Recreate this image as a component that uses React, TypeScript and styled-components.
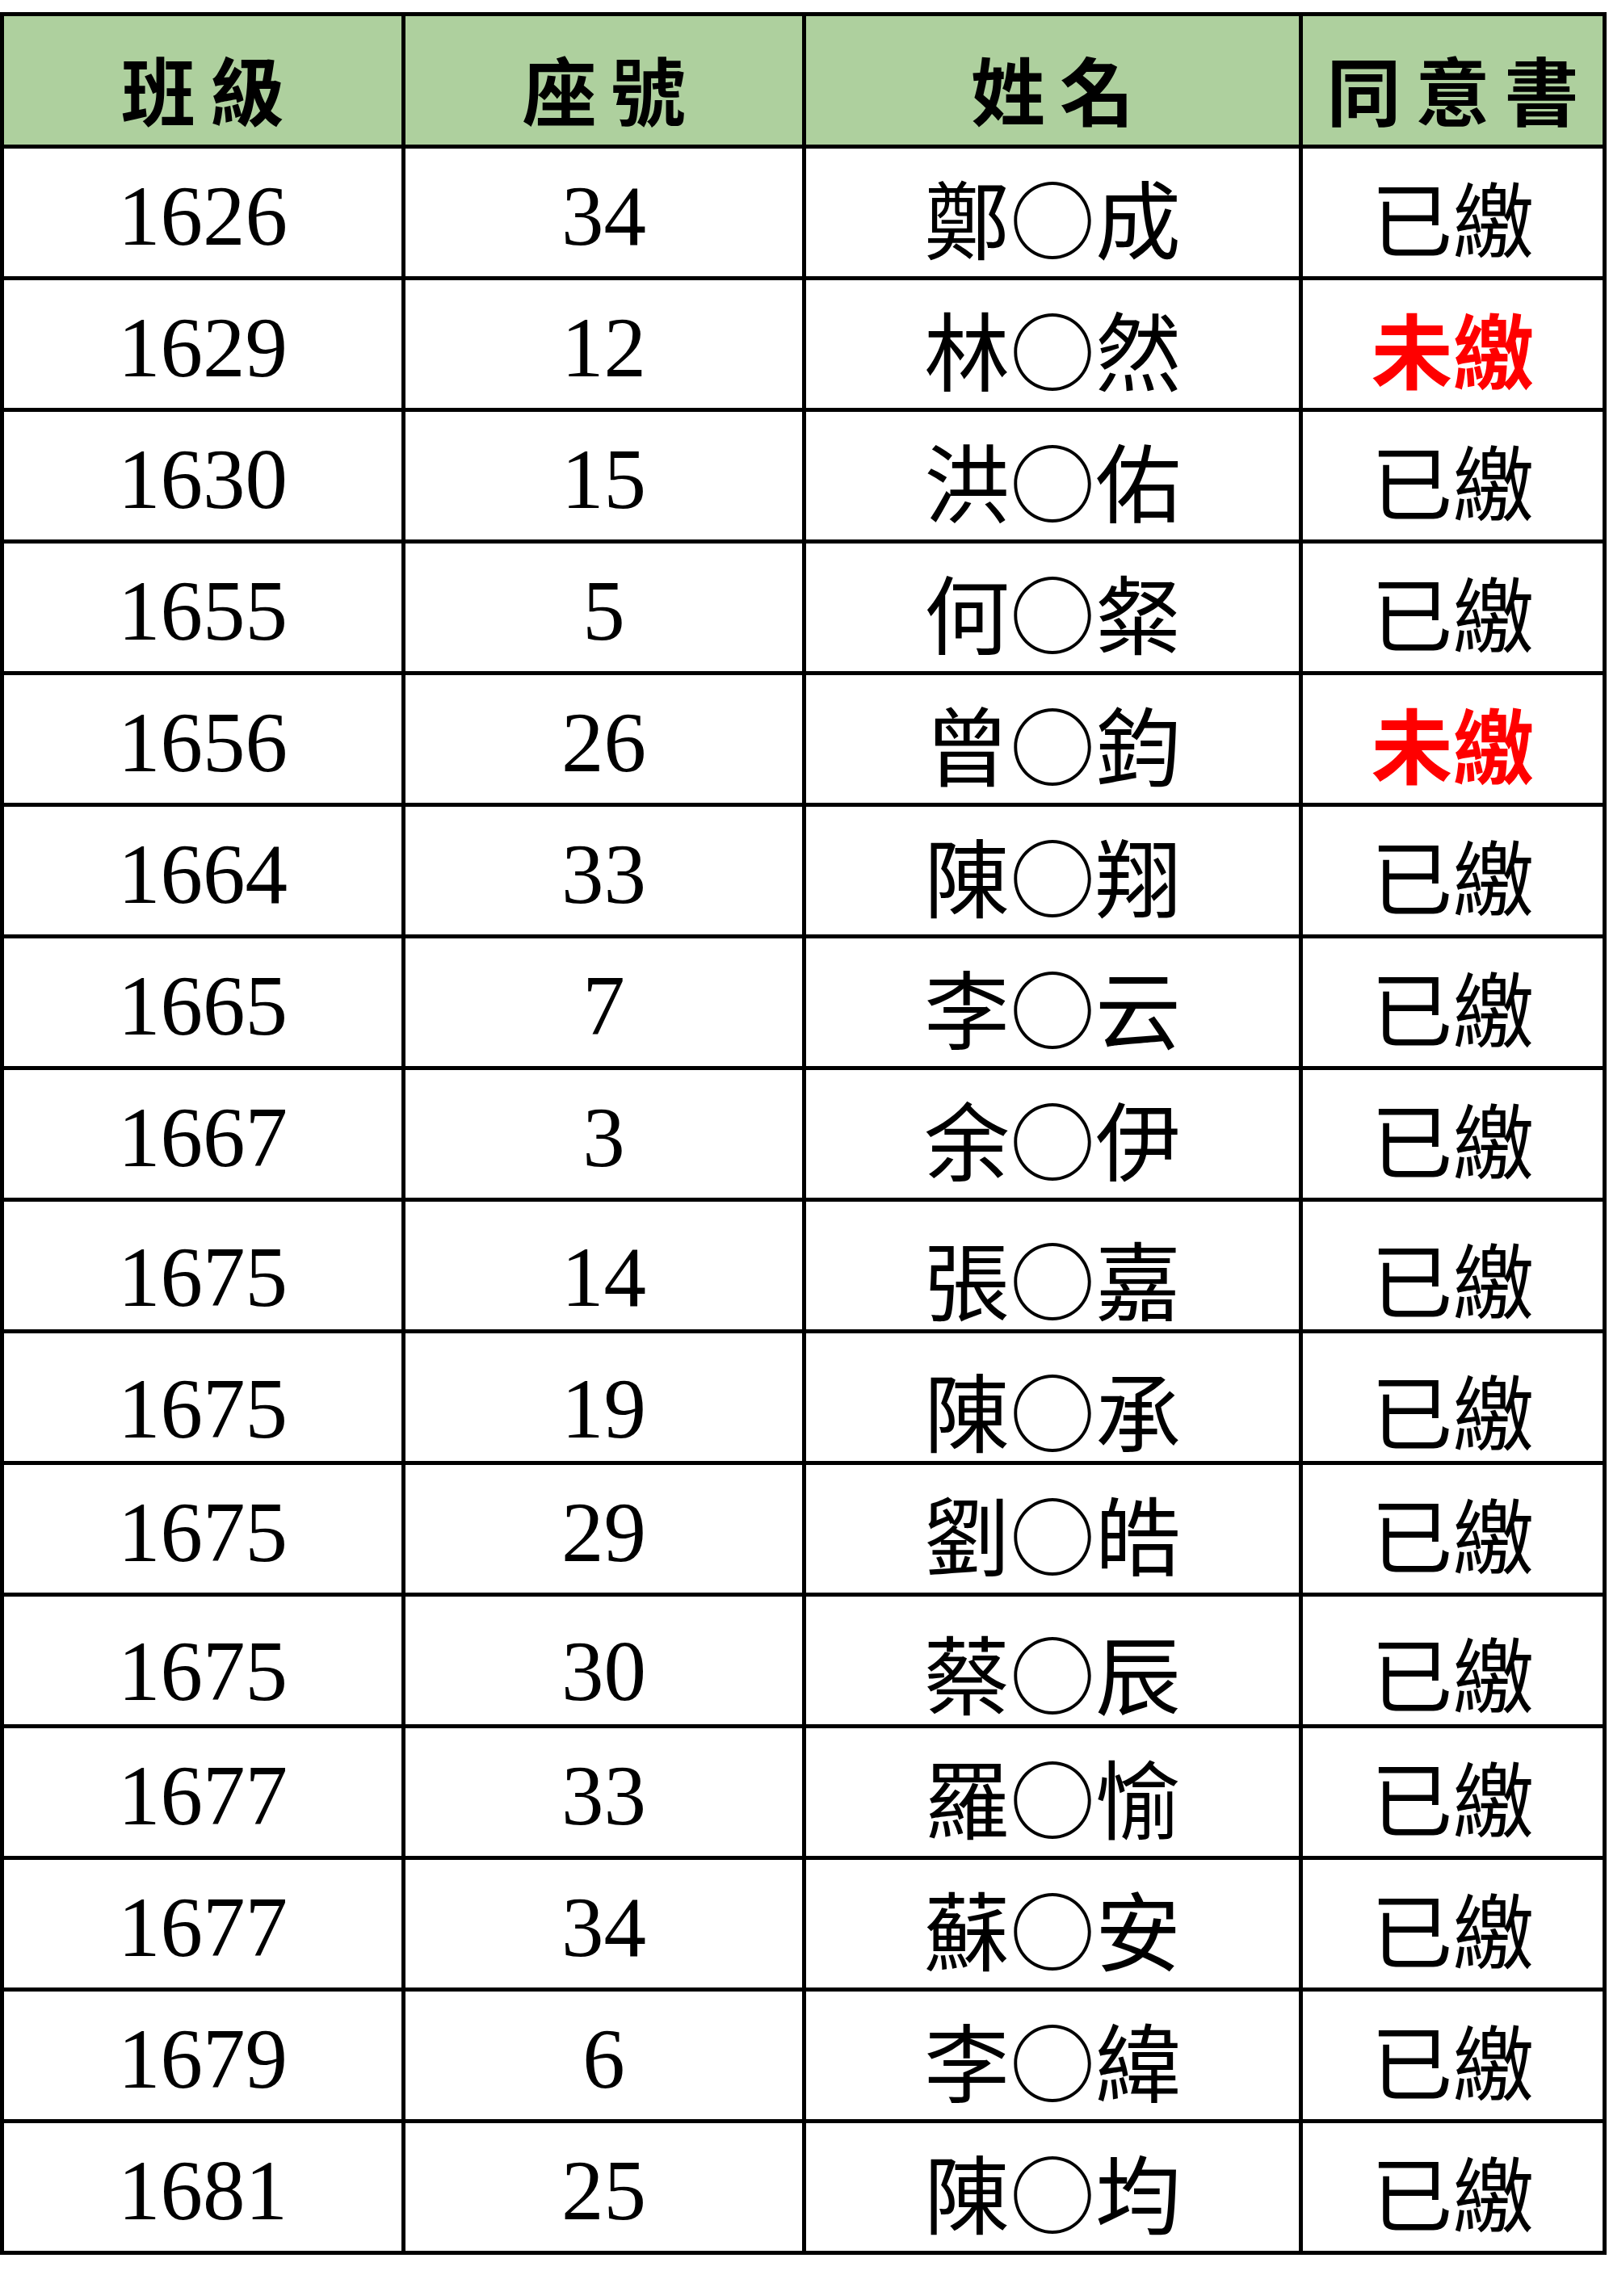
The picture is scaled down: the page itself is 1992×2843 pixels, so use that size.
import { Fragment } from "react";
import styled, { createGlobalStyle } from "styled-components";

const GlobalStyle = createGlobalStyle`
  html, body {
    margin: 0;
    padding: 0;
    background: #ffffff;
  }
`;

const Page = styled.div`
  padding-top: 15px;
`;

const Sheet = styled.div`
  display: inline-grid;
  grid-template-columns: 492px 491px 610px 371px;
  grid-auto-rows: 158px;
  grid-template-rows: 159px;
  gap: 5px;
  padding: 5px;
  background: #000000;
`;

const HeadCell = styled.div`
  display: flex;
  align-items: center;
  justify-content: center;
  background: #aed09e;
  color: #000000;
  font-family: "Noto Sans CJK TC", sans-serif;
  font-weight: 700;
  font-size: 92px;
  letter-spacing: 18px;
  padding: 18px 0 0 18px;
  box-sizing: border-box;
`;

const Cell = styled.div<{ $shift?: number; $kind?: "num" | "name" | "status"; $red?: boolean }>`
  display: flex;
  align-items: center;
  justify-content: center;
  background: #ffffff;
  color: ${(p) => (p.$red ? "#ff0000" : "#000000")};
  font-family: ${(p) =>
    p.$kind === "num"
      ? '"Liberation Serif", "Noto Sans CJK TC", serif'
      : '"Noto Sans CJK TC", sans-serif'};
  font-size: ${(p) => (p.$kind === "name" ? "106px" : p.$kind === "status" ? "101px" : "105px")};
  font-weight: ${(p) => (p.$red ? 700 : 400)};
  line-height: 1;
  padding-top: ${(p) => 8 + (p.$shift ?? 0) * 2}px;
  box-sizing: border-box;
`;

type Row = { cls: string; seat: string; name: string; paid: boolean; shift?: number };

const rows: Row[] = [
  { cls: "1626", seat: "34", name: "鄭○成", paid: true },
  { cls: "1629", seat: "12", name: "林○然", paid: false },
  { cls: "1630", seat: "15", name: "洪○佑", paid: true },
  { cls: "1655", seat: "5", name: "何○粲", paid: true },
  { cls: "1656", seat: "26", name: "曾○鈞", paid: false },
  { cls: "1664", seat: "33", name: "陳○翔", paid: true },
  { cls: "1665", seat: "7", name: "李○云", paid: true },
  { cls: "1667", seat: "3", name: "余○伊", paid: true },
  { cls: "1675", seat: "14", name: "張○嘉", paid: true, shift: 10 },
  { cls: "1675", seat: "19", name: "陳○承", paid: true, shift: 10 },
  { cls: "1675", seat: "29", name: "劉○皓", paid: true },
  { cls: "1675", seat: "30", name: "蔡○辰", paid: true, shift: 9 },
  { cls: "1677", seat: "33", name: "羅○愉", paid: true },
  { cls: "1677", seat: "34", name: "蘇○安", paid: true },
  { cls: "1679", seat: "6", name: "李○緯", paid: true },
  { cls: "1681", seat: "25", name: "陳○均", paid: true },
];

function App() {
  return (
    <>
      <GlobalStyle />
      <Page>
        <Sheet>
          <HeadCell>班級</HeadCell>
          <HeadCell>座號</HeadCell>
          <HeadCell>姓名</HeadCell>
          <HeadCell>同意書</HeadCell>
          {rows.map((r, i) => (
            <Fragment key={i}>
              <Cell $kind="num" $shift={r.shift}>{r.cls}</Cell>
              <Cell $kind="num" $shift={r.shift}>{r.seat}</Cell>
              <Cell $kind="name" $shift={r.shift}>{r.name}</Cell>
              <Cell $kind="status" $shift={r.shift} $red={!r.paid}>
                {r.paid ? "已繳" : "未繳"}
              </Cell>
            </Fragment>
          ))}
        </Sheet>
      </Page>
    </>
  );
}

export default App;
